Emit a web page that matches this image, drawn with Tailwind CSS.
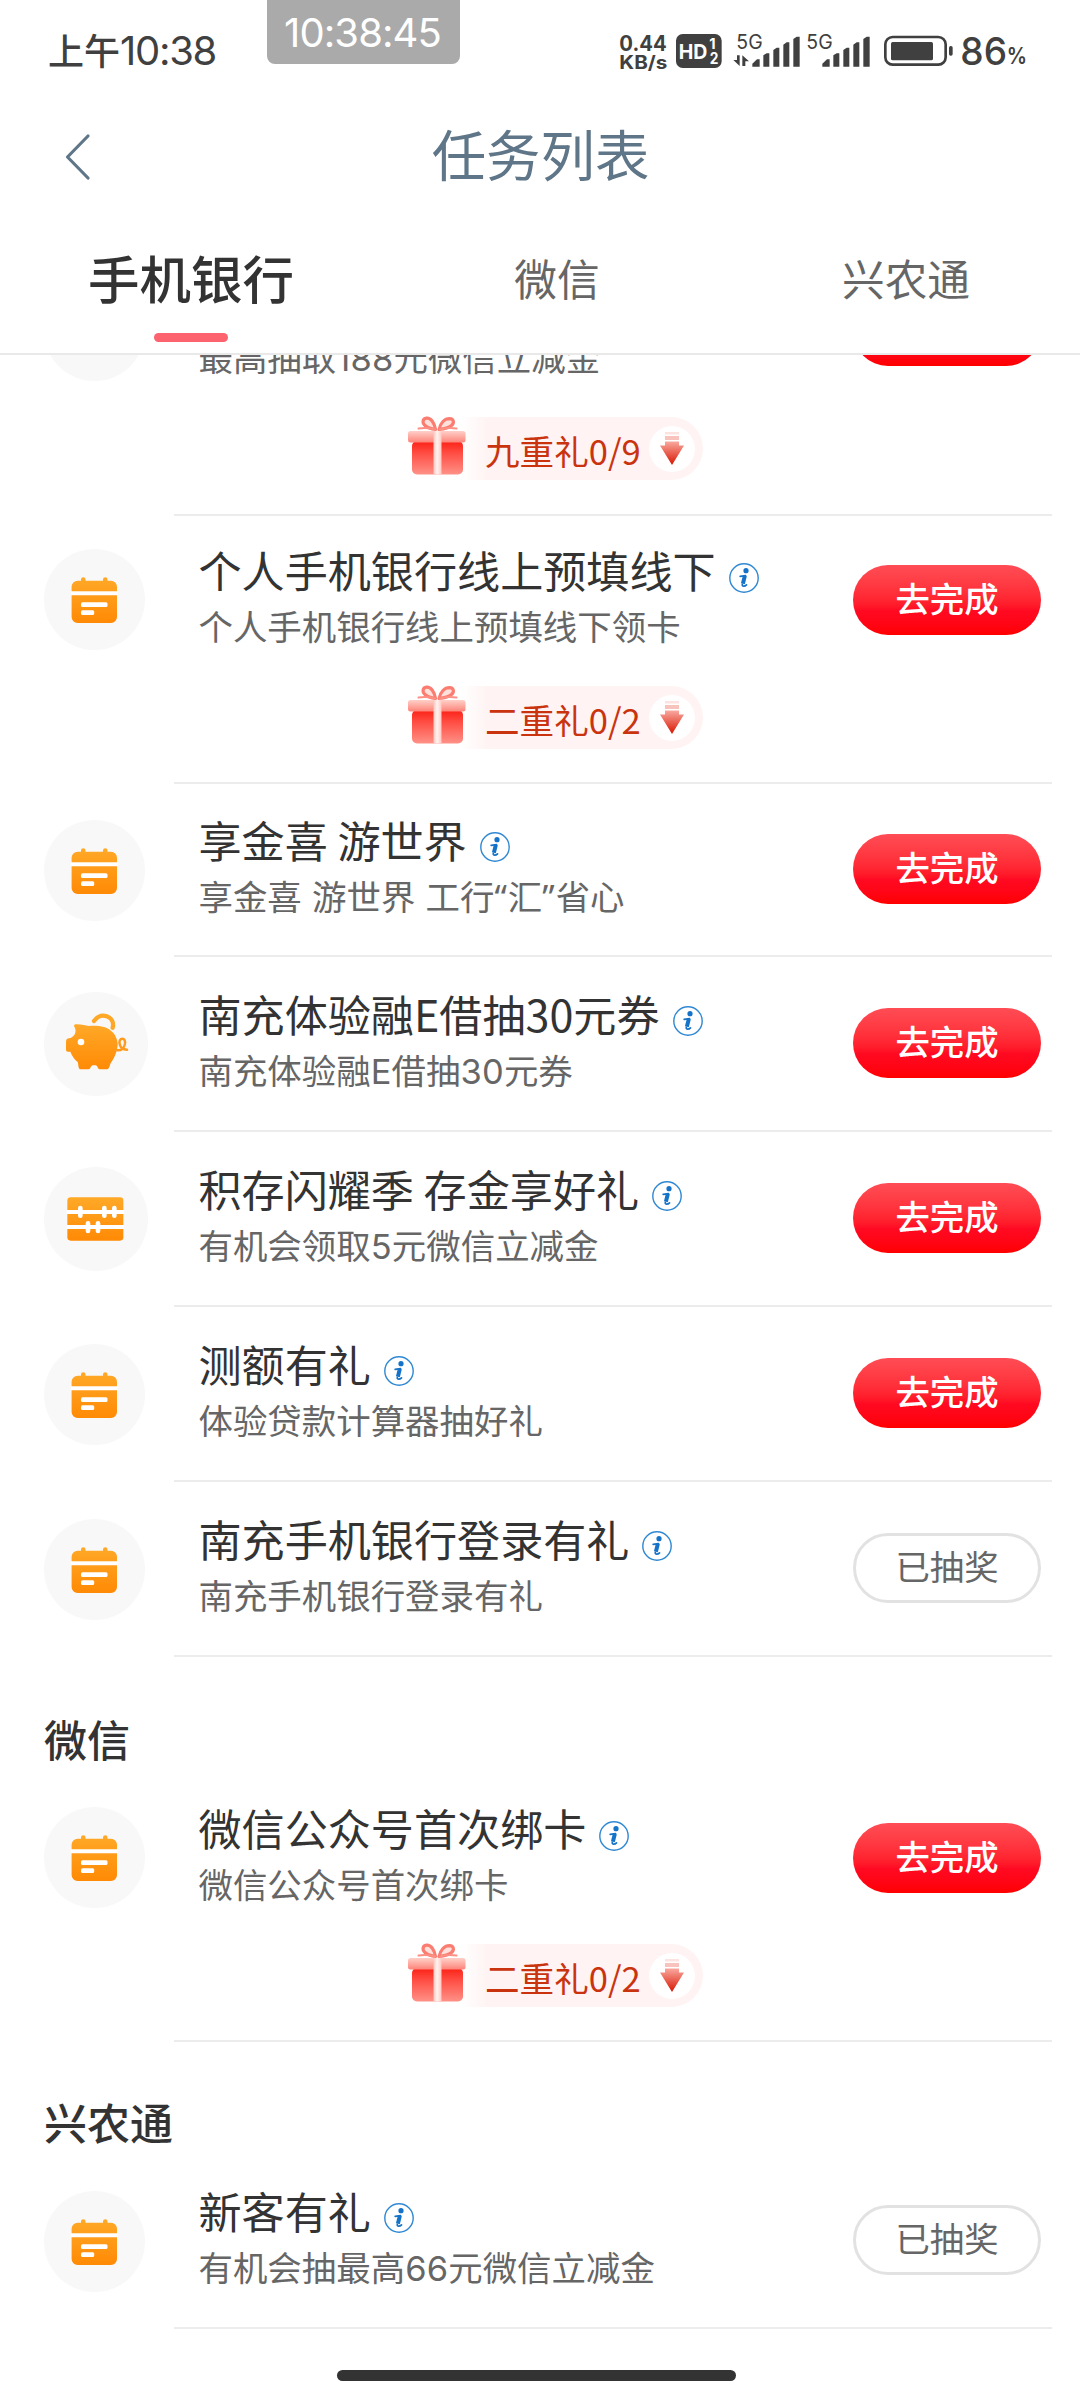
<!DOCTYPE html>
<html lang="zh-CN">
<head>
  <meta charset="UTF-8" />
  <meta name="viewport" content="width=device-width, initial-scale=1.0" />
  <title>任务列表</title>
  <script src="https://cdn.jsdelivr.net/npm/@tailwindcss/browser@4"></script>
</head>
<body class="w-[1080px] h-[2400px] overflow-hidden bg-white flex flex-col text-[#333] font-['Noto_Sans_CJK_SC',sans-serif]">

  <!-- shared icons -->
  <svg class="absolute w-0 h-0" aria-hidden="true">
    <defs>
      <linearGradient id="orange" x1="0" y1="0" x2="0" y2="1">
        <stop offset="0" stop-color="#ffa928" /><stop offset="1" stop-color="#ff8a05" />
      </linearGradient>
      <linearGradient id="giftBody" x1="0" y1="0" x2="0" y2="1">
        <stop offset="0" stop-color="#fb2015" /><stop offset=".35" stop-color="#ff4c42" /><stop offset="1" stop-color="#ff9187" />
      </linearGradient>
      <linearGradient id="giftLid" x1="0" y1="0" x2="0" y2="1">
        <stop offset="0" stop-color="#ffd0c9" /><stop offset="1" stop-color="#fd8378" />
      </linearGradient>
      <linearGradient id="ribbon" x1="0" y1="0" x2="1" y2="0">
        <stop offset="0" stop-color="#ffc4bd" /><stop offset=".45" stop-color="#fff3f1" /><stop offset="1" stop-color="#ffc9c2" />
      </linearGradient>
      <linearGradient id="arrow" x1="0" y1="0" x2="0" y2="1">
        <stop offset="0" stop-color="#f9a89f" /><stop offset="1" stop-color="#d91500" />
      </linearGradient>
    </defs>
    <symbol id="icon-calendar" viewBox="0 0 101 101">
      <path fill="url(#orange)" d="M33.600 31.700h3.400v-1.200a2 2 0 0 1 4.500 0v1.200h17.500v-1.200a2 2 0 0 1 4.500 0v1.200h3.500a6 6 0 0 1 6 6V68a6 6 0 0 1-6 6H33.600a6 6 0 0 1-6-6V37.700a6 6 0 0 1 6-6z" />
      <path fill="#fff" d="M27 42.300h46.500v4H27z" />
      <rect x="37" y="53.300" width="26.500" height="4.700" rx="1.500" fill="#fff" />
      <rect x="37" y="61.300" width="13.200" height="4.700" rx="1.500" fill="#fff" />
    </symbol>
    <symbol id="icon-piggy" viewBox="132 96 312 312">
      <path fill="none" stroke="#ffa726" stroke-width="13" stroke-linecap="round" d="M282 183c10-13 24-19 38-14 16 6 22 20 18 34" />
      <path fill="url(#orange)" d="M222 198c0-4 4-5 8-5 16 1 28 3 36 5 14-2 32-1 46 3 24 8 38 24 41 49 0 22-8 42-22 61-2 9-5 17-12 17h-20c-6 0-6-12-12-12h-8c-8 0-6 12-14 12h-23c-8 0-6-14-9-22-10-8-17-18-22-31h-7c-5 0-6-4-6-9v-20c0-7 3-11 9-11 9-2 15-8 18-14 3-8 2-15-3-23z" />
      <circle cx="243" cy="246" r="10" fill="#fff" />
      <path fill="none" stroke="#ff9a1c" stroke-width="7.500" stroke-linecap="round" d="M352 271c12 1 21-7 23-20 1-9-2-15-8-15-7 0-10 7-8 16 2 11 10 17 22 17" />
    </symbol>
    <symbol id="icon-abacus" viewBox="132 622 312 312">
      <rect x="202" y="713" width="168" height="130" rx="10" fill="url(#orange)" />
      <path stroke="#fff" stroke-width="12" d="M200 757h172M200 802h172" />
      <path stroke="#fff" stroke-width="14" stroke-linecap="round" d="M241 745v23M313 745v23M343 745v23M264 791v23M294 791v23" />
    </symbol>
    <symbol id="icon-info" viewBox="0 0 30 30">
      <circle cx="15" cy="15" r="14.200" fill="none" stroke="#2f88d2" stroke-width="1.400" />
      <circle cx="17" cy="7.700" r="2.600" fill="#1473c8" />
      <path fill="none" stroke="#1473c8" stroke-width="4" d="M15.900 12.800 13.900 20.800" />
      <path fill="none" stroke="#1473c8" stroke-width="1.800" stroke-linecap="round" stroke-linejoin="round" d="M11.200 13.300l5.300-.6M13.300 21.500c-.3 2.200 2.500 2.100 4.200.4" />
    </symbol>
    <symbol id="icon-gift" viewBox="0 0 58 59">
      <rect x="4" y="25" width="51" height="33.500" rx="5" fill="url(#giftBody)" />
      <rect x="0" y="15" width="57.500" height="11.500" rx="2.500" fill="url(#giftLid)" />
      <rect x="25.500" y="15" width="8" height="43.500" fill="url(#ribbon)" />
      <g fill="#ffe0db" stroke="#fb7c70" stroke-width="3.200" stroke-linejoin="round">
        <path d="M27.500 13.500C26.500 7 23 1.800 18.500 2.200c-4 .6-4.500 4.800-1.500 7.300 2.500 2.300 6.500 3.500 10.500 4z" />
        <path d="M31 13.500C32.500 7 36.500 2.700 41.500 2.700c4.500.2 5 4.300 2 6.800-2.700 2.300-7.500 3.500-12.500 4z" />
      </g>
      <path fill="none" stroke="#fd9085" stroke-width="2" stroke-linecap="round" d="M27 13.500c-5-1.500-11-1.800-16.500-1M32 13.500c5-1.500 11-1.800 16.500-1" />
    </symbol>
    <symbol id="icon-down" viewBox="0 0 24 33">
      <path fill="#fde3e0" d="M5 0h14v2.500H5z" />
      <path fill="#f9c3bd" d="M5 4h14v4H5z" />
      <path fill="url(#arrow)" d="M5 9.500h14v4h5L12 33 0 13.500h5z" />
    </symbol>
  </svg>

  <!-- status bar -->
  <header class="h-[103px] shrink-0 flex items-start text-[#404040]">
    <div class="w-[267px] pl-[48px] pt-[23px] flex items-center leading-[56px] whitespace-nowrap">
      <span class="-mt-[4px] text-[36px] font-medium">上午</span><span class="text-[40px] tracking-[-1.300px] font-['Inter',sans-serif]">10:38</span>
    </div>
    <div class="w-[193px] h-[64px] rounded-b-lg bg-[#aaa] text-white text-center text-[40px] tracking-[-0.900px] leading-[65px] pr-[2px] font-['Inter',sans-serif]">10:38:45</div>
    <svg class="ml-[157px] mt-[30px] w-[413px] h-[43px] font-['Inter',sans-serif]" viewBox="51 90 1239 129" fill="#404040">
      <text x="58" y="153" font-size="63" font-weight="700" textLength="142" lengthAdjust="spacingAndGlyphs">0.44</text>
      <text x="58" y="207" font-size="55" font-weight="700" textLength="144" lengthAdjust="spacingAndGlyphs">KB/s</text>
      <rect x="228" y="102" width="137" height="102" rx="20" />
      <g fill="#fff" font-weight="700">
        <text x="236" y="177" font-size="61" textLength="86" lengthAdjust="spacingAndGlyphs">HD</text>
        <text x="328" y="147" font-size="44">1</text>
        <text x="329" y="191" font-size="46" textLength="26" lengthAdjust="spacingAndGlyphs">2</text>
      </g>
      <text x="409" y="147" font-size="60" textLength="79" lengthAdjust="spacingAndGlyphs">5G</text>
      <text x="619" y="147" font-size="60" textLength="79" lengthAdjust="spacingAndGlyphs">5G</text>
      <path d="M411 166h8v32l-19-18h11zM427 198v-32l20 18h-11v14z" />
      <path id="bars" d="M457 200v-9l14-13h8v22zM490 200v-34l10-6h8v40zM520 200v-50l10-7h8v57zM550 200v-66l10-7h8v73zM580 200v-83l10-7h9v90z" />
      <use href="#bars" x="210" />
      <rect x="856" y="111" width="181" height="83" rx="22" fill="none" stroke="#404040" stroke-width="8" />
      <rect x="873" y="126" width="126" height="55" rx="5" />
      <rect x="1047" y="138" width="11" height="29" rx="5" />
      <text x="1081" y="195" font-size="115" font-weight="500" textLength="140" lengthAdjust="spacingAndGlyphs">86</text>
      <text x="1220" y="193" font-size="67" font-weight="600" textLength="61" lengthAdjust="spacingAndGlyphs">%</text>
    </svg>
  </header>

  <!-- title bar -->
  <nav class="h-[108px] shrink-0 grid grid-cols-3 items-center text-[#5f7688]">
    <svg class="ml-[64px] w-[27px] h-[48px]" viewBox="0 0 27 48" fill="none" stroke="#5f7688" stroke-width="3.200" stroke-linecap="round" stroke-linejoin="round"><path d="M24 3 3.500 24 24 45" /></svg>
    <h1 class="text-center text-[54.4px] leading-[80px] whitespace-nowrap -mt-[8px] pl-[1px]">任务列表</h1>
  </nav>

  <!-- tabs -->
  <div class="h-[144px] shrink-0 flex border-b-2 border-[#e9e9e9]">
    <div class="w-[382px] flex flex-col items-center pt-[29px]">
      <span class="text-[51.500px] leading-[74px] font-medium">手机银行</span>
      <span class="mt-[18.500px] w-[74px] h-[9px] rounded-full bg-[#fc636f]"></span>
    </div>
    <div class="w-[350px] text-center pt-[36px] text-[42.700px] leading-[60px] text-[#666]">微信</div>
    <div class="flex-1 text-center pt-[36px] text-[42.700px] leading-[60px] text-[#666]">兴农通</div>
  </div>

  <main class="h-[1974px] shrink-0 overflow-hidden">
    <div id="list" class="-mt-[108px]"></div>
  </main>

  <footer class="pt-[41px] pr-[7px] flex justify-center">
    <span class="w-[399px] h-[11px] rounded-full bg-[#333]"></span>
  </footer>

  <script>
    const q = s => `<span class="font-['Noto_Sans',sans-serif] tracking-[1px]">${s}</span>`;
    const n = s => `<span class="font-['Inter',sans-serif] tracking-[0.200px]">${s}</span>`;

    const rows = [
      { title: "", sub: `最高抽取${n("188")}元微信立减金`, gift: "九重礼0/9", height: "h-[269px]" },
      { title: "个人手机银行线上预填线下", sub: "个人手机银行线上预填线下领卡", gift: "二重礼0/2" },
      { title: "享金喜 游世界", sub: `享金喜 游世界 工行${q("“")}汇${q("”")}省心`, height: "h-[173px]" },
      { title: "南充体验融E借抽30元券", sub: `南充体验融${n("E")}借抽${n("30")}元券`, icon: "piggy" },
      { title: "积存闪耀季 存金享好礼", sub: `有机会领取${n("5")}元微信立减金`, icon: "abacus" },
      { title: "测额有礼", sub: "体验贷款计算器抽好礼" },
      { title: "南充手机银行登录有礼", sub: "南充手机银行登录有礼", done: true },
      { heading: "微信", height: "h-[117px] pt-[50px]" },
      { title: "微信公众号首次绑卡", sub: "微信公众号首次绑卡", gift: "二重礼0/2" },
      { heading: "兴农通", height: "h-[112px] pt-[48px]" },
      { title: "新客有礼", sub: `有机会抽最高${n("66")}元微信立减金`, done: true },
    ];

    const button = done => done
      ? `<button class="-mt-[1px] w-[188px] h-[70px] rounded-full border-[3px] border-[#e2e2e2] bg-white pb-[5px] text-[34.400px] leading-[59px] text-[#666]">已抽奖</button>`
      : `<button class="-mt-[1px] w-[188px] h-[70px] rounded-full bg-linear-to-b from-[#ff4c55] via-[#ff0a22] via-65% to-[#ff0000] pb-[5px] text-[34.400px] leading-[65px] font-medium text-white">去完成</button>`;

    const gift = text => `
      <div class="pl-[234px] pt-[1px] flex items-start">
        <svg class="relative z-10 w-[58px] h-[59px]"><use href="#icon-gift" /></svg>
        <div class="mt-[1px] -ml-[6px] w-[243px] h-[63px] rounded-r-full bg-linear-to-r from-white to-[#fff3f3] to-12% flex items-center pl-[25px] pr-[8px]">
          <span class="flex-1 pt-[2px] text-[34.600px] leading-[60px] text-[#c9340f] whitespace-nowrap">${text}</span>
          <span class="w-[46px] h-[46px] rounded-full bg-white flex items-center justify-center"><svg class="w-[24px] h-[33px]"><use href="#icon-down" /></svg></span>
        </div>
      </div>`;

    const row = r => {
      if (r.heading) return `<h2 class="${r.height} pl-[44px] text-[43px] leading-[62px] font-medium">${r.heading}</h2>`;
      const big = r.icon ? "w-[104px] h-[104px]" : "w-[101px] h-[101px]";
      const main = r.gift ? "h-[168px]" : "h-full";
      const height = r.height || (r.gift ? "h-[268px]" : "h-[175px]");
      return `
      <section class="${height} flex">
        <div class="${main} w-[174px] pl-[43.500px] pb-[1px] flex items-center">
          <span class="${big} rounded-full bg-[#f8f8f8]"><svg class="w-full h-full"><use href="#icon-${r.icon || "calendar"}" /></svg></span>
        </div>
        <div class="w-[878px] border-b-2 border-[#ececec]">
          <div class="${main} pl-[24.500px] pr-[11px] flex items-center justify-between">
            <div class="whitespace-nowrap">
              <div class="h-[50px] flex items-center text-[43.100px] leading-[50px]">${r.title}<svg class="ml-[13px] mt-[17px] w-[30px] h-[30px]"><use href="#icon-info" /></svg></div>
              <div class="h-[62px] text-[34.450px] leading-[62px] [word-spacing:2.500px] text-[#666]">${r.sub}</div>
            </div>
            ${button(r.done)}
          </div>
          ${r.gift ? gift(r.gift) : ""}
        </div>
      </section>`;
    };

    document.getElementById("list").innerHTML = rows.map(row).join("");
  </script>
</body>
</html>
